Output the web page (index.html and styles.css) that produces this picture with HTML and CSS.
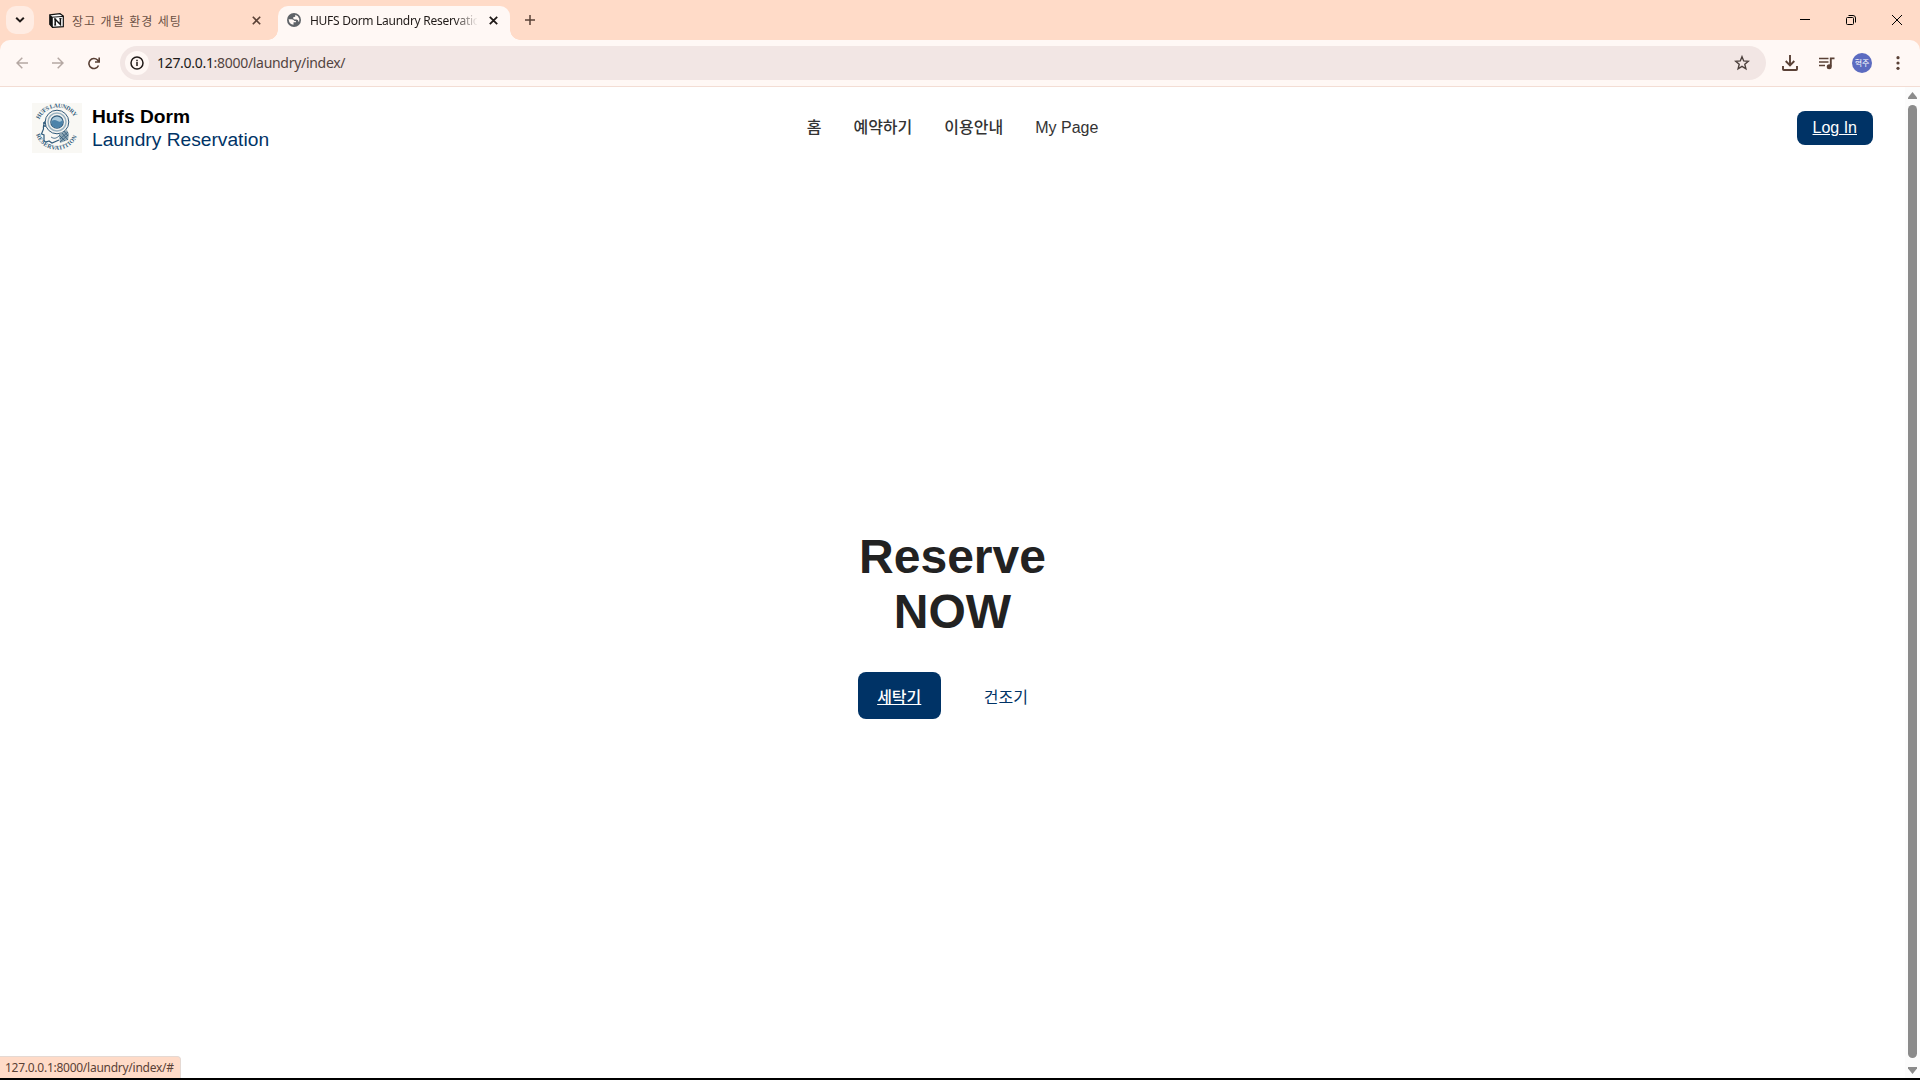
FILE: index.html
```html
<!DOCTYPE html>
<html lang="ko">
<head>
<meta charset="utf-8">
<title>HUFS Dorm Laundry Reservation</title>
<link rel="stylesheet" href="styles.css">
</head>
<body>
<div class="browser">
  <div class="tabstrip">
    <div class="tab-search"><svg width="10" height="8" viewBox="0 0 10 8"><path d="M1.2 1.7 5 5.4 8.8 1.7" fill="none" stroke="#201a18" stroke-width="2"/></svg></div>
    <div class="tab">
      <svg width="15" height="15" viewBox="0 0 15 15"><path d="M.8 1.800 11 .7l3.300 2.400v10.500l-10.800.8L.8 11.200z" fill="#fff" stroke="#111" stroke-width="1.200"/><path d="M.8 1.800 3.800 4v10.400L.8 11.200z" fill="#111"/><path d="M3.500 4.200 14.300 3.400" stroke="#111"/><path d="M6.200 12V6.300l5.200 5.200V5.700" fill="none" stroke="#111" stroke-width="1.500"/><path d="M5.200 6.100h2M5.200 12.100h2M10.300 5.600h2.300" stroke="#111"/></svg>
      <span class="tab-title">장고 개발 환경 세팅</span>
      <svg class="close" width="9" height="9" viewBox="0 0 9 9"><path d="m.8.8 7.400 7.400M8.200.8.8 8.200" stroke="#5a4136" stroke-width="1.600"/></svg>
    </div>
    <div class="tab tab-active">
      <svg width="14" height="14" viewBox="0 0 14 14"><circle cx="7" cy="7" r="7" fill="#5f6368"/><path d="M1.600 6.300h3.200q2 .2 2.600 1.600h1.500v1.300H6.500v2.600q-4.300-.4-4.900-5.500zM8.300 1.700q3.200.9 4 4.300l-.1 2.500h-1.100V7.200L9.600 6.500H7.500L6.200 5.600V4.300l2-.5z" fill="#fff8f5"/></svg>
      <span class="tab-title">HUFS Dorm Laundry Reservation</span>
      <svg class="close" width="9" height="9" viewBox="0 0 9 9"><path d="m.8.8 7.400 7.400M8.200.8.8 8.200" stroke="#201a18" stroke-width="1.800"/></svg>
    </div>
    <svg class="new-tab" width="10" height="10" viewBox="0 0 10 10"><path d="M5 0v10M0 5h10" stroke="#5a4136" stroke-width="1.500"/></svg>
    <div class="window-buttons">
      <svg width="10" height="10" viewBox="0 0 10 10"><path d="M0 4.500h10" stroke="#000"/></svg>
      <svg width="10" height="10" viewBox="0 0 10 10"><rect x=".5" y="2.500" width="7" height="7" rx="1" fill="none" stroke="#000"/><path d="M2.500.5H7A2.500 2.500 0 0 1 9.500 3v4.500" fill="none" stroke="#000"/></svg>
      <svg width="10" height="10" viewBox="0 0 10 10"><path d="m0 0 10 10M10 0 0 10" stroke="#000"/></svg>
    </div>
  </div>
  <div class="toolbar">
    <svg class="back" width="12" height="12" viewBox="0 0 12 12"><path d="M12 6H1M6.300.8 1 6l5.300 5.200" fill="none" stroke="#b5a8a3" stroke-width="1.500"/></svg>
    <svg class="forward" width="12" height="12" viewBox="0 0 12 12"><path d="M0 6h11M5.700.8 11 6l-5.300 5.200" fill="none" stroke="#b5a8a3" stroke-width="1.500"/></svg>
    <svg class="reload" width="12" height="13" viewBox="0 0 12 13"><path d="M10.500 8.500A5 5 0 1 1 9.500 3L11 4.800M11.200.5V5H7" fill="none" stroke="#5a4136" stroke-width="1.600"/></svg>
    <div class="omnibox">
      <div class="site-info"><svg width="14" height="14" viewBox="0 0 14 14"><circle cx="7" cy="7" r="6" fill="none" stroke="#201a18" stroke-width="1.500"/><path d="M7 6v4M7 3.700v1.500" stroke="#201a18" stroke-width="1.500"/></svg></div>
      <span class="url"><b>127.0.0.1</b>:8000/laundry/index/</span>
      <svg class="star" width="16" height="16" viewBox="0 0 16 16"><path d="m8 1.700 1.700 4.200 4.600.4-3.500 3 1.100 4.500L8 11.400l-3.900 2.400 1.100-4.500-3.500-3 4.600-.4z" fill="none" stroke="#4b3f3b" stroke-width="1.400"/></svg>
    </div>
    <svg class="download" width="16" height="16" viewBox="0 0 16 16"><path d="M8 0v10M3.700 6 8 10.300 12.300 6M1 11v3.200q0 .8.800.8h12.400q.8 0 .8-.8V11" fill="none" stroke="#5a4136" stroke-width="1.900"/></svg>
    <svg class="media" width="16" height="13" viewBox="0 0 16 13"><path d="M0 1.500h9.500M0 5h9.500M0 8.500h6" stroke="#5a4136" stroke-width="1.600"/><path d="M11.800 9.500V1.400H15.500" fill="none" stroke="#5a4136" stroke-width="1.900"/><circle cx="10.200" cy="9.700" r="2.500" fill="#5a4136"/></svg>
    <div class="avatar">혁주</div>
    <svg class="menu" width="4" height="14" viewBox="0 0 4 14" fill="#5a4136"><circle cx="2" cy="1.700" r="1.600"/><circle cx="2" cy="7" r="1.600"/><circle cx="2" cy="12.300" r="1.600"/></svg>
  </div>
  <div class="viewport">
    <div class="page">
      <header class="header">
        <div class="brand">
          <svg width="50" height="50" viewBox="0 0 50 50">
            <defs><path id="arc-top" d="M7.500 16.500A19.500 19.500 0 0 1 43.500 16.500"/><path id="arc-bottom" d="M4 31.500A22 22 0 0 0 46 31"/></defs>
            <rect width="50" height="50" fill="#f9f8f4"/>
            <text class="seal-text"><textPath href="#arc-top" textLength="43">HUFS LAUNDRY</textPath></text>
            <text class="seal-text"><textPath href="#arc-bottom" textLength="53">RESERVATITION</textPath></text>
            <g fill="none" stroke="#315b7b">
              <path d="M14 17q-3 4-2.500 9l-2 5 2.500 1v5q0 3 5 1l3 2 7-3" stroke-width="1.200"/>
              <path d="M11 20h4M11 23h4" stroke-width="1.500"/>
              <path d="M19 34q4 3 8-1" stroke-width=".8"/>
              <circle cx="25" cy="19" r="11.800" fill="#f5f4f1"/>
              <circle cx="25" cy="19" r="9" stroke="#9bb4c2" stroke-width="1.500"/>
              <circle cx="25" cy="19" r="6.200" fill="#a9c9dc" stroke-width="1.200"/>
            </g>
            <path d="M19.500 18q3-2 6 0t5-1a5.700 5.700 0 0 1-11 4z" fill="#4c83aa"/>
            <path d="M27 31 35 27l2 4-1 6-8 3q-1-5-1-9z" fill="#8ea7b5"/>
            <path d="m27 32 6 6m-3-8 6 7m-4-9 4 5M28 36l8-7m-8 10 8-7" stroke="#315b7b" stroke-width=".8"/>
          </svg>
          <div class="brand-name"><strong>Hufs Dorm</strong><span>Laundry Reservation</span></div>
        </div>
        <nav class="nav"><a>홈</a><a>예약하기</a><a>이용안내</a><a class="latin">My Page</a></nav>
        <a class="login">Log In</a>
      </header>
      <main class="hero">
        <h1>Reserve<br>NOW</h1>
        <div class="actions"><a class="action action-primary">세탁기</a><a class="action">건조기</a></div>
      </main>
    </div>
    <div class="scrollbar">
      <svg width="9" height="7" viewBox="0 0 9 7"><path d="M4.500 0 9 5.500V7H0V5.500z" fill="#8b8b8b"/></svg>
      <div class="thumb"></div>
      <svg width="9" height="7" viewBox="0 0 9 7"><path d="M4.500 7 9 1.500V0H0v1.500z" fill="#8b8b8b"/></svg>
    </div>
    <div class="status">127.0.0.1:8000/laundry/index/#</div>
  </div>
</div>
</body>
</html>
```
FILE: styles.css
```css
* { box-sizing: border-box; }
body { margin: 0; background: #000; font-family: "Liberation Sans", "Noto Sans CJK KR", sans-serif; }
svg { display: block; flex: none; }
.browser { display: flex; flex-direction: column; width: 1920px; height: 1078px; overflow: hidden; background: #ffdbc8; }
.tabstrip, .toolbar { font-family: "Noto Sans", "Noto Sans CJK KR", sans-serif; }
.tabstrip { display: flex; align-items: center; height: 40px; padding-left: 6px; flex: none; }
.tab-search { display: grid; place-items: center; width: 28px; height: 28px; border-radius: 10px; background: #ffece3; }
.tab { display: flex; align-items: center; width: 240px; height: 34px; margin-top: 6px; padding: 0 0 6px 15px; }
.tab-title { width: 168px; margin-left: 8px; padding-top: 2px; overflow: hidden; white-space: nowrap; font: 12px/20px "Noto Sans CJK KR", sans-serif; letter-spacing: 1.05px; color: #6b5044; }
.close { margin-left: 12px; }
.tab-active { position: relative; width: 232px; margin-left: 4px; padding-left: 9px; border-radius: 10px 10px 0 0; background: #fff8f5; }
.tab-active::before, .tab-active::after { content: ""; position: absolute; bottom: 0; width: 10px; height: 10px; }
.tab-active::before { left: -10px; background: radial-gradient(circle at 0 0, #ffdbc8 9.5px, #fff8f5 10px); }
.tab-active::after { right: -10px; background: radial-gradient(circle at 100% 0, #ffdbc8 9.5px, #fff8f5 10px); }
.tab-active .tab-title { width: 167px; margin-left: 9px; font: 12px/20px "Noto Sans", sans-serif; letter-spacing: -.28px; color: #201a18; mask-image: linear-gradient(90deg, #000 145px, transparent 168px); }
.new-tab { margin-left: 15px; }
.window-buttons { display: flex; gap: 36px; margin: 0 18px 0 auto; }
.toolbar { display: flex; align-items: center; height: 47px; flex: none; padding: 0 20px 0 16px; border-bottom: 1px solid #f3ddd4; border-radius: 10px 10px 0 0; background: #fff8f5; }
.forward { margin-left: 24px; }
.reload { margin-left: 24px; }
.omnibox { display: flex; align-items: center; width: 1646px; height: 34px; margin-left: 20px; padding: 0 16px 0 5px; border-radius: 17px; background: #f2e6e4; }
.site-info { display: grid; place-items: center; width: 24px; height: 24px; border-radius: 50%; background: #fff8f5; }
.url { margin-left: 8px; font-size: 14px; line-height: 20px; letter-spacing: -.3px; color: #534440; }
.url b { font-weight: 400; color: #201a18; }
.star { margin-left: auto; }
.download { margin-left: 16px; }
.media { margin-left: 21px; }
.avatar { display: grid; place-items: center; width: 20px; height: 20px; margin-left: 17px; border-radius: 50%; background: #5c6bc0; color: #fff; font: 8px/20px "Noto Sans CJK KR", sans-serif; }
.menu { margin-left: auto; }
.viewport { position: relative; display: flex; flex: 1; min-height: 0; background: #fff; }
.page { display: flex; flex-direction: column; flex: 1; }
.header { display: grid; grid-template-columns: 1fr auto 1fr; align-items: center; height: 82px; padding: 0 32px; }
.brand { display: flex; align-items: center; gap: 10px; }
.brand-name { display: flex; flex-direction: column; font-size: 19.2px; line-height: 23px; color: #036; }
.brand-name strong { color: #000; }
.seal-text { font: bold 6px "Liberation Serif", serif; fill: #315b7b; }
.nav { display: flex; gap: 32px; font-size: 16px; font-weight: 500; line-height: 24px; color: #333; }
.latin { font-weight: 400; }
.login { justify-self: end; padding: 8px 16px; border-radius: 8px; background: #036; color: #fff; font-size: 16px; line-height: 18px; text-decoration: underline; }
.hero { display: flex; flex: 1; flex-direction: column; align-items: center; padding-top: 360px; }
h1 { margin: 0; font-size: 48px; line-height: 55px; text-align: center; color: #222; }
.actions { display: flex; gap: 24px; margin-top: 33px; }
.action { padding: 14px 19.2px 10px; border-radius: 8px; font-size: 16px; line-height: 23px; color: #036; }
.action-primary { background: #036; color: #fff; font-weight: 500; text-decoration: underline; }
.scrollbar { display: flex; flex-direction: column; align-items: center; justify-content: space-between; width: 15px; padding: 5px 0 4px; background: #fcfcfc; }
.thumb { width: 9px; height: 953px; margin-bottom: 3px; border-radius: 5px; background: #8b8b8b; }
.status { position: absolute; left: 0; bottom: 0; width: 181px; height: 22px; padding-left: 5px; border: solid #e5d9d3; border-width: 1px 1px 0 0; border-radius: 0 4px 0 0; background: #ffdbc8; color: #5a4136; font: 12px/21px "Noto Sans", sans-serif; letter-spacing: -.26px; white-space: nowrap; }
```
